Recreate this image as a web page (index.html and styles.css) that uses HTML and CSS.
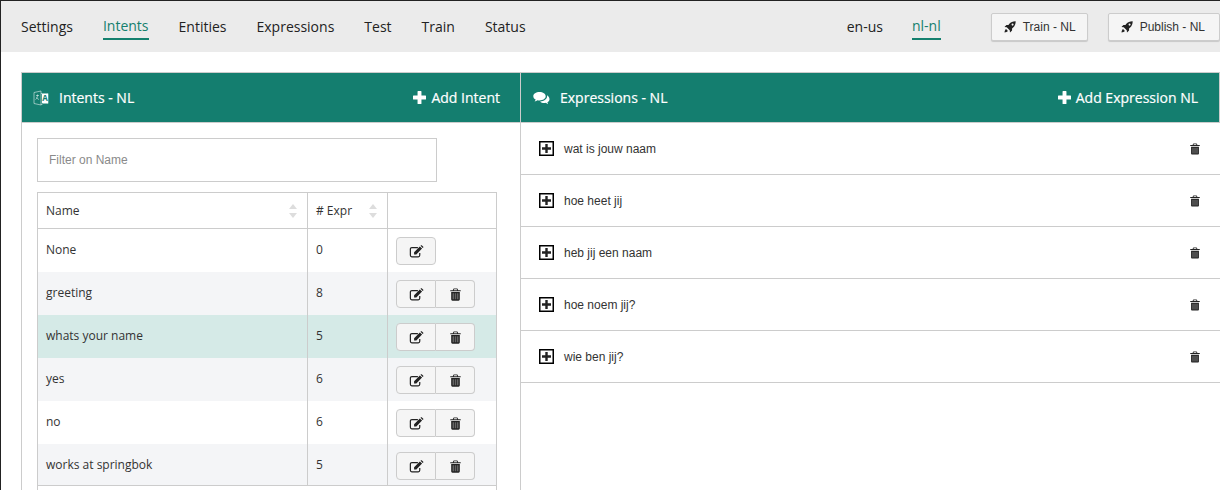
FILE: index.html
```html
<!DOCTYPE html>
<html lang="nl">

<head>
    <meta charset="UTF-8">
    <title>Intents - NL</title>
    <link rel="stylesheet" href="styles.css">
</head>

<body>
    <svg class="defs">
        <symbol id="i-rocket" viewBox="0 0 14 14">
            <path d="M13.6.4C10.6.3 8 1.4 6 3.6L5.2 4.6H2.8L.6 7l2.6.3 3.5 3.5.3 2.6 2.4-2.2V8.8l1-.8C12.600 6 13.800 3.400 13.600.4zM10 5.400a1.200 1.200 0 1 1 0-2.400 1.200 1.200 0 0 1 0 2.400zM2.400 9.400C1.300 10.200.8 11.600.6 13.400c1.800-.2 3.200-.7 4-1.800z"/>
        </symbol>
        <symbol id="i-edit" viewBox="0 0 16 14">
            <path fill="none" stroke="currentColor" stroke-width="1.300" d="M11.500 8.500v2.600a1.600 1.600 0 0 1-1.600 1.600H3a1.600 1.600 0 0 1-1.600-1.600V4.400A1.600 1.600 0 0 1 3 2.800h6.500"/>
            <path d="M5.400 7.700 11.600 1.500 14 3.900 7.800 10.100H5.400zM12.300.8l.6-.5c.2-.2.5-.2.7 0l1.700 1.700c.2.200.2.500 0 .7l-.6.500z"/>
        </symbol>
        <symbol id="i-trash" viewBox="0 0 12 14">
            <path d="M4 .5h4L9 2.300h2.700v1.200H.3V2.300H3zM4.600 1.400l-.4.900h3.600l-.4-.9zM1.300 4.300h9.400v8c0 .8-.6 1.400-1.300 1.400H2.600c-.7 0-1.300-.6-1.300-1.400z"/>
            <path fill="#fff" fill-opacity=".3" d="M2.800 5.500h1.600v6.800H2.800zM5.200 5.500h1.600v6.800H5.200zM7.600 5.500h1.600v6.800H7.600z"/>
        </symbol>
        <symbol id="i-plus" viewBox="0 0 12 12">
            <path d="M4.700 0h2.600a.5.5 0 0 1 .5.5v3.700h3.700a.5.500 0 0 1 .5.500v2.600a.5.500 0 0 1-.5.500H7.800v3.700a.5.500 0 0 1-.5.500H4.700a.5.500 0 0 1-.5-.5V7.800H.5A.5.500 0 0 1 0 7.300V4.700a.5.500 0 0 1 .5-.5h3.700V.5a.5.500 0 0 1 .5-.5z"/>
        </symbol>
        <symbol id="i-box" viewBox="0 0 15 15">
            <rect x=".75" y=".75" width="13.500" height="13.500" fill="none" stroke="currentColor" stroke-width="1.500"/>
            <path d="M6.300 3h2.400v3.300H12v2.400H8.700V12H6.300V8.700H3V6.300h3.300z"/>
        </symbol>
        <symbol id="i-comments" viewBox="0 0 17 14">
            <path d="M6.500 1C3 1 .3 2.900.3 5.200c0 1.400.9 2.600 2.400 3.400-.2.700-.6 1.300-1.100 1.800 1.100-.2 2.100-.6 2.900-1.200.6.100 1.300.2 2 .2 3.500 0 6.200-1.900 6.200-4.200S10 1 6.500 1z"/>
            <path d="M14 4.300c.1.300.1.600.1.900 0 2.800-3 5-7 5.200.9 1 2.400 1.600 4.200 1.600.5 0 1-.1 1.500-.2.700.6 1.500.9 2.500 1.100-.4-.4-.7-1-.9-1.600 1.300-.7 2.100-1.800 2.100-3 0-1.600-1-3-2.500-4z"/>
        </symbol>
        <symbol id="i-language" viewBox="0 0 16 16">
            <path fill="none" stroke="currentColor" stroke-width=".7" stroke-opacity=".75" d="M1 2.500 8 1v14l-7-1.500zM8 3.500h7v10H10L8 15"/>
            <path fill="currentColor" d="M9 4h6v9H9z"/>
            <text x="12" y="11" text-anchor="middle" class="icon-letter">A</text>
            <path fill="none" stroke="currentColor" stroke-width=".7" stroke-opacity=".75" d="M3 5.500h3M4.500 4.500v1c0 2-1 3.500-2 4M3.500 7.500c.5 1 1.300 1.600 2.500 2"/>
        </symbol>
    </svg>

    <div class="app">
        <header class="topbar">
            <nav class="tabs">
                <a class="tab">Settings</a>
                <a class="tab active">Intents</a>
                <a class="tab">Entities</a>
                <a class="tab">Expressions</a>
                <a class="tab">Test</a>
                <a class="tab">Train</a>
                <a class="tab">Status</a>
            </nav>
            <nav class="locales">
                <a class="tab">en-us</a>
                <a class="tab active">nl-nl</a>
            </nav>
            <div class="actions">
                <button class="top-btn"><svg class="icon-rocket"><use href="#i-rocket"/></svg>Train - NL</button>
                <button class="top-btn top-btn-wide"><svg class="icon-rocket"><use href="#i-rocket"/></svg>Publish - NL</button>
            </div>
        </header>

        <main class="panels">
            <section class="panel panel-intents">
                <div class="panel-head">
                    <h2 class="panel-title"><svg class="icon-language"><use href="#i-language"/></svg>Intents - NL</h2>
                    <a class="panel-add"><svg class="icon-plus"><use href="#i-plus"/></svg>Add Intent</a>
                </div>
                <div class="panel-body">
                    <input class="filter" type="text" placeholder="Filter on Name">
                    <table class="intents">
                        <thead>
                            <tr>
                                <th class="col-name"><span class="th-inner">Name<span class="sort"></span></span></th>
                                <th class="col-expr"><span class="th-inner">#&nbsp;Expr<span class="sort"></span></span></th>
                                <th class="col-actions"></th>
                            </tr>
                        </thead>
                        <tbody>
                            <tr>
                                <td>None</td>
                                <td>0</td>
                                <td><span class="btn-group"><button class="icon-btn"><svg class="icon-edit"><use href="#i-edit"/></svg></button></span></td>
                            </tr>
                            <tr class="odd">
                                <td>greeting</td>
                                <td>8</td>
                                <td><span class="btn-group"><button class="icon-btn"><svg class="icon-edit"><use href="#i-edit"/></svg></button><button class="icon-btn"><svg class="icon-trash"><use href="#i-trash"/></svg></button></span></td>
                            </tr>
                            <tr class="selected">
                                <td>whats your name</td>
                                <td>5</td>
                                <td><span class="btn-group"><button class="icon-btn"><svg class="icon-edit"><use href="#i-edit"/></svg></button><button class="icon-btn"><svg class="icon-trash"><use href="#i-trash"/></svg></button></span></td>
                            </tr>
                            <tr class="odd">
                                <td>yes</td>
                                <td>6</td>
                                <td><span class="btn-group"><button class="icon-btn"><svg class="icon-edit"><use href="#i-edit"/></svg></button><button class="icon-btn"><svg class="icon-trash"><use href="#i-trash"/></svg></button></span></td>
                            </tr>
                            <tr>
                                <td>no</td>
                                <td>6</td>
                                <td><span class="btn-group"><button class="icon-btn"><svg class="icon-edit"><use href="#i-edit"/></svg></button><button class="icon-btn"><svg class="icon-trash"><use href="#i-trash"/></svg></button></span></td>
                            </tr>
                            <tr class="odd">
                                <td>works at springbok</td>
                                <td>5</td>
                                <td><span class="btn-group"><button class="icon-btn"><svg class="icon-edit"><use href="#i-edit"/></svg></button><button class="icon-btn"><svg class="icon-trash"><use href="#i-trash"/></svg></button></span></td>
                            </tr>
                        </tbody>
                    </table>
                    <div class="table-foot"></div>
                </div>
            </section>

            <section class="panel panel-expressions">
                <div class="panel-head">
                    <h2 class="panel-title"><svg class="icon-comments"><use href="#i-comments"/></svg>Expressions - NL</h2>
                    <a class="panel-add"><svg class="icon-plus"><use href="#i-plus"/></svg>Add Expression NL</a>
                </div>
                <ul class="expressions">
                    <li class="expression"><svg class="icon-box"><use href="#i-box"/></svg><span class="expression-text">wat is jouw naam</span><svg class="icon-trash-small"><use href="#i-trash"/></svg></li>
                    <li class="expression"><svg class="icon-box"><use href="#i-box"/></svg><span class="expression-text">hoe heet jij</span><svg class="icon-trash-small"><use href="#i-trash"/></svg></li>
                    <li class="expression"><svg class="icon-box"><use href="#i-box"/></svg><span class="expression-text">heb jij een naam</span><svg class="icon-trash-small"><use href="#i-trash"/></svg></li>
                    <li class="expression"><svg class="icon-box"><use href="#i-box"/></svg><span class="expression-text">hoe noem jij?</span><svg class="icon-trash-small"><use href="#i-trash"/></svg></li>
                    <li class="expression"><svg class="icon-box"><use href="#i-box"/></svg><span class="expression-text">wie ben jij?</span><svg class="icon-trash-small"><use href="#i-trash"/></svg></li>
                </ul>
            </section>
        </main>
    </div>
</body>

</html>
```

FILE: styles.css
```css
html,
body {
    margin: 0;
    height: 490px;
    overflow: hidden;
    background-color: #fff;
}

body {
    font-family: "Open Sans", sans-serif;
    font-size: 12px;
    color: #333;
}

.defs {
    display: none;
}

.app {
    border-top: 1px solid #222;
    border-left: 1px solid #222;
    height: 489px;
    overflow: hidden;
}

/* top bar */
.topbar {
    display: flex;
    align-items: flex-start;
    height: 51px;
    padding-left: 20px;
    background-color: #ebebeb;
}

.tabs,
.locales {
    display: flex;
    padding-top: 16px;
}

.tabs {
    gap: 30px;
}

.locales {
    gap: 29px;
    margin-left: auto;
}

.tab {
    display: block;
    height: 22px;
    font-size: 14px;
    line-height: 20px;
    color: #222;
}

.tab.active {
    color: #14806e;
    border-bottom: 2px solid #14806e;
    margin-top: -1px;
}

.actions {
    display: flex;
    gap: 20px;
    margin-left: 50px;
    padding-top: 12px;
}

.top-btn {
    display: flex;
    align-items: center;
    height: 28px;
    padding: 0 11px 0 12px;
    font-family: "Liberation Sans", Arial, sans-serif;
    font-size: 12px;
    color: #333;
    background-color: #f5f5f5;
    border: 1px solid #ccc;
    border-radius: 2px;
    box-shadow: 0 1px 1px rgba(0, 0, 0, .15);
}

.top-btn-wide {
    padding-right: 14px;
}

.icon-rocket {
    width: 12px;
    height: 12px;
    margin-right: 7px;
    fill: #222;
}

/* panels */
.panels {
    display: flex;
    padding: 20px 0 0 20px;
}

.panel {
    height: 440px;
    box-sizing: border-box;
}

.panel-intents {
    flex: none;
    width: 500px;
    border-left: 1px solid #ccc;
    border-right: 1px solid #ccc;
}

.panel-expressions {
    flex: 1;
    min-width: 0;
}

.panel-head {
    display: flex;
    align-items: center;
    justify-content: space-between;
    height: 51px;
    box-sizing: border-box;
    padding: 0 20px 0 11px;
    color: #fff;
    background-color: #147e6f;
    border-top: 1px solid #ccc;
    border-bottom: 1px solid #ccc;
}

.panel-expressions .panel-head {
    padding: 0 21px 0 12px;
    border-right: 1px solid #ccc;
}

.panel-title,
.panel-add {
    display: flex;
    align-items: center;
    margin: 0;
    font-size: 14px;
    font-weight: 500;
    -webkit-text-stroke: .2px #fff;
}

.icon-language {
    width: 16px;
    height: 16px;
    margin-right: 10px;
    color: #fff;
}

.icon-letter {
    font-family: "Open Sans", sans-serif;
    font-size: 8px;
    font-weight: 700;
    fill: #147e6f;
    -webkit-text-stroke: 0;
}

.icon-comments {
    width: 17px;
    height: 14px;
    margin-right: 10px;
    fill: #fff;
}

.icon-plus {
    width: 13px;
    height: 13px;
    margin-right: 5px;
    fill: #fff;
}

.panel-body {
    padding: 15px 15px 0;
}

.filter {
    display: block;
    width: 400px;
    height: 44px;
    box-sizing: border-box;
    padding: 0 11px;
    font-family: "Liberation Sans", Arial, sans-serif;
    font-size: 12px;
    border: 1px solid #ccc;
    border-radius: 0;
    outline: none;
}

.filter::placeholder {
    color: #8a8a8a;
}

/* intents table */
.intents {
    width: 460px;
    margin-top: 10px;
    border-collapse: collapse;
    table-layout: fixed;
}

.intents th,
.intents td {
    padding: 0 8px;
    border: 1px solid #ccc;
    border-top: none;
    border-bottom: none;
    text-align: left;
    font-weight: 400;
}

.intents th {
    height: 35px;
    border-top: 1px solid #ccc;
    border-bottom: 1px solid #ccc;
    color: #333;
}

.intents td {
    height: 43px;
    padding-bottom: 2px;
    box-sizing: border-box;
}

.col-name {
    width: 253px;
}

.col-expr {
    width: 63px;
}

.intents td:last-child {
    padding: 0 0 0 8px;
    vertical-align: middle;
}

.odd {
    background-color: #f4f5f7;
}

.selected {
    background-color: #d5eae7;
}

.th-inner {
    display: flex;
    align-items: center;
    justify-content: space-between;
}

.sort {
    display: flex;
    flex-direction: column;
    gap: 4px;
    margin-right: 2px;
}

.sort::before,
.sort::after {
    content: "";
    border-left: 4px solid transparent;
    border-right: 4px solid transparent;
}

.sort::before {
    border-bottom: 5px solid #ddd;
}

.sort::after {
    border-top: 5px solid #ddd;
}

.btn-group {
    display: inline-flex;
    vertical-align: middle;
    margin-top: 2px;
}

.icon-btn {
    display: flex;
    align-items: center;
    justify-content: center;
    width: 40px;
    height: 28px;
    padding: 0;
    background-color: #f5f5f5;
    border: 1px solid #ccc;
    border-radius: 4px;
}

.btn-group .icon-btn:first-child:not(:last-child) {
    border-radius: 4px 0 0 4px;
}

.btn-group .icon-btn:last-child:not(:first-child) {
    width: 39px;
    border-left: none;
    border-radius: 0 4px 4px 0;
}

.icon-edit {
    width: 15px;
    height: 13px;
    color: #222;
    fill: #222;
}

.icon-trash {
    width: 11px;
    height: 13px;
    fill: #222;
}

.table-foot {
    height: 20px;
    width: 458px;
    margin-top: -2px;
    border: 1px solid #ccc;
    background-color: #fff;
}

/* expressions */
.expressions {
    margin: 0;
    padding: 0;
    list-style: none;
}

.expression {
    display: flex;
    align-items: center;
    height: 52px;
    box-sizing: border-box;
    padding: 0 20px 0 18px;
    border-bottom: 1px solid #ccc;
    font-family: "Liberation Sans", Arial, sans-serif;
    color: #333;
}

.icon-box {
    width: 15px;
    height: 15px;
    margin-right: 10px;
    color: #000;
    fill: #222;
}

.expression-text {
    flex: 1;
}

.icon-trash-small {
    width: 10px;
    height: 12px;
    fill: #222;
}
```
